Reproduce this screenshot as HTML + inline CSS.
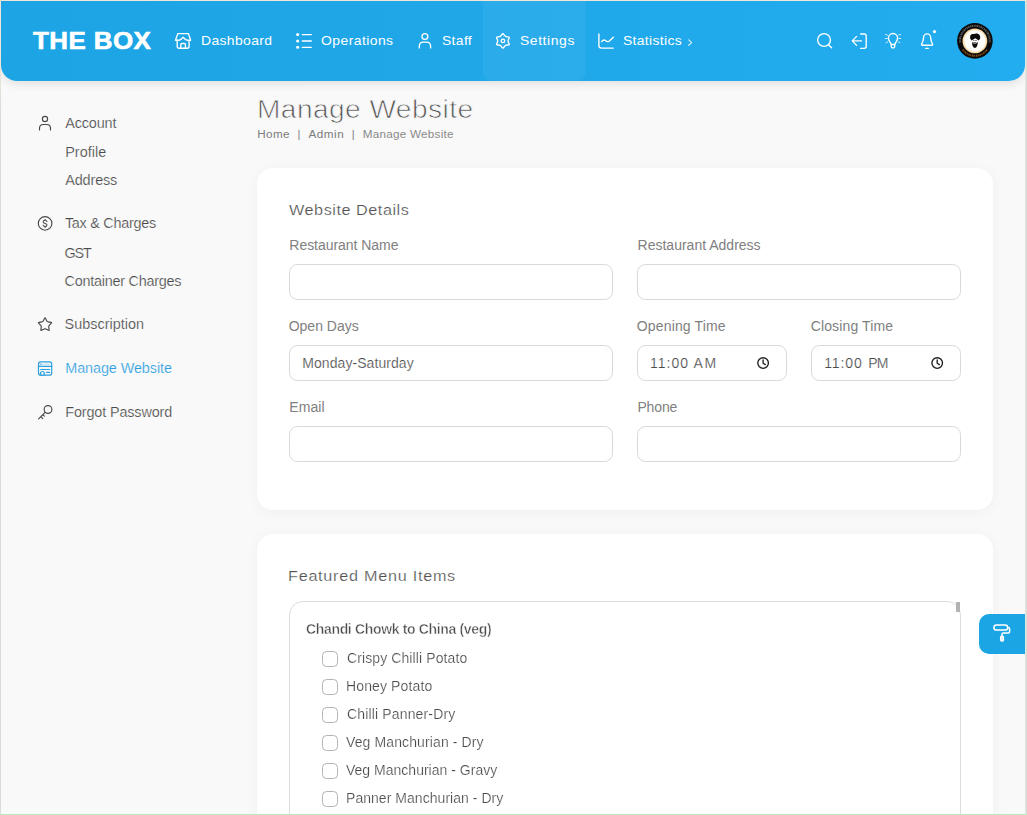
<!DOCTYPE html>
<html lang="en">
<head>
<meta charset="utf-8">
<title>Manage Website - The Box</title>
<style>
*{box-sizing:border-box;margin:0;padding:0}
html,body{width:1027px;height:815px;overflow:hidden}
body{position:relative;background:#f9f9f9;font-family:"Liberation Sans",sans-serif;color:#4a4a4a}
.t{position:absolute;white-space:nowrap;line-height:1;font-weight:400;text-decoration:none;display:block}
svg{position:absolute;overflow:visible;fill:none}
.w{stroke:#fff;stroke-width:1.35;stroke-linecap:round;stroke-linejoin:round}
.g{stroke:#484848;stroke-width:1.15;stroke-linecap:round;stroke-linejoin:round}
.b{stroke:#2a9fe0;stroke-width:1.2;stroke-linecap:round;stroke-linejoin:round}
/* window frame lines */
.edge{position:absolute;z-index:50}
#e-top{left:0;top:0;width:1027px;height:1px;background:#efe6d8}
#e-left{left:0;top:0;width:1px;height:815px;background:linear-gradient(#efe6d8 0,#efe6d8 60px,#d9dcd9 110px,#d9dcd9 100%)}
#e-right{left:1025px;top:1px;width:2px;height:814px;background:linear-gradient(90deg,#e2e5e1 0,#e2e5e1 50%,#d7dcd5 50%,#d7dcd5 100%)}
#e-bot{left:0;top:814px;width:1027px;height:1px;background:#b4f0b6}
header{position:absolute;left:1px;top:1px;width:1024px;height:79.5px;border-radius:0 0 16px 16px;
 background:linear-gradient(90deg,#1ca4e4 0%,#1fa7e8 45%,#22adf0 100%);box-shadow:0 3px 10px rgba(0,0,0,.10);z-index:10}
#tab{position:absolute;left:482px;top:0;width:102.5px;height:79.5px;border-radius:0 0 9px 9px;background:rgba(255,255,255,.055)}
#layer{position:absolute;left:0;top:0;width:1027px;height:815px;z-index:20}
.card{position:absolute;left:257px;width:736px;background:#fff;border-radius:16px;box-shadow:0 2px 14px rgba(0,0,0,.045)}
#c1{top:168px;height:342px}
#c2{top:534px;height:320px}
.inp{position:absolute;height:36px;border:1px solid #d9d9d9;border-radius:8.5px;background:#fff}
#menu{position:absolute;left:289px;top:601px;width:672px;height:260px;border:1px solid #dcdcdc;border-radius:14px;background:#fff}
#thumb{position:absolute;left:956px;top:602px;width:4px;height:10px;background:#b3b3b3}
.cb{position:absolute;left:322px;width:16px;height:16px;border:1px solid #b4b4b4;border-radius:4.5px;background:#fff}
#fab{position:absolute;left:979px;top:613.5px;width:46px;height:40.5px;background:#1ca5e5;border-radius:10px 0 0 10px;z-index:15}
</style>
</head>
<body>
<header><div id="tab"></div></header>

<div class="card" id="c1"></div>
<div class="card" id="c2"></div>
<div id="menu"></div>
<div id="thumb"></div>

<div class="inp" style="left:289px;top:264px;width:324px"></div>
<div class="inp" style="left:637px;top:264px;width:324px"></div>
<div class="inp" style="left:289px;top:345px;width:324px"></div>
<div class="inp" style="left:637px;top:345px;width:150px"></div>
<div class="inp" style="left:811px;top:345px;width:150px"></div>
<div class="inp" style="left:289px;top:426px;width:324px"></div>
<div class="inp" style="left:637px;top:426px;width:324px"></div>

<div class="cb" style="top:650.5px"></div>
<div class="cb" style="top:678.5px"></div>
<div class="cb" style="top:706.5px"></div>
<div class="cb" style="top:734.5px"></div>
<div class="cb" style="top:762.5px"></div>
<div class="cb" style="top:790.5px"></div>

<div id="fab"></div>

<div id="layer">
  <!-- ===== header text ===== -->
  <a class="t logo" href="#" style="left:33.01px;top:29.15px;font-size:23.8px;color:#fff;letter-spacing:0.386px;font-weight:700;transform:scaleX(1.09);transform-origin:0 0;-webkit-text-stroke:.6px #fff;">THE BOX</a>
  <nav>
    <a class="t" href="#" style="left:200.86px;top:34.05px;font-size:13px;color:#fff;letter-spacing:0.349px;transform:scaleX(1.07);transform-origin:0 0;">Dashboard</a>
    <a class="t" href="#" style="left:321.14px;top:34.05px;font-size:13px;color:#fff;letter-spacing:0.417px;transform:scaleX(1.07);transform-origin:0 0;">Operations</a>
    <a class="t" href="#" style="left:441.87px;top:34.05px;font-size:13px;color:#fff;letter-spacing:0.317px;transform:scaleX(1.07);transform-origin:0 0;">Staff</a>
    <a class="t" href="#" style="left:520.37px;top:34.05px;font-size:13px;color:#fff;letter-spacing:0.544px;transform:scaleX(1.07);transform-origin:0 0;">Settings</a>
    <a class="t" href="#" style="left:623.17px;top:34.05px;font-size:13px;color:#fff;letter-spacing:0.310px;transform:scaleX(1.07);transform-origin:0 0;">Statistics</a>
  </nav>
  <!-- ===== sidebar ===== -->
  <aside>
    <a class="t" href="#" style="left:65.17px;top:116.01px;font-size:14.4px;color:#4a4a4a;letter-spacing:-0.111px;-webkit-text-stroke:.2px #f9f9f9;">Account</a>
    <a class="t" href="#" style="left:65.22px;top:144.71px;font-size:14.4px;color:#4a4a4a;letter-spacing:0.055px;-webkit-text-stroke:.2px #f9f9f9;">Profile</a>
    <a class="t" href="#" style="left:65.17px;top:172.91px;font-size:14.4px;color:#4a4a4a;letter-spacing:-0.107px;-webkit-text-stroke:.2px #f9f9f9;">Address</a>
    <a class="t" href="#" style="left:64.88px;top:216.01px;font-size:14.4px;color:#4a4a4a;letter-spacing:-0.253px;-webkit-text-stroke:.2px #f9f9f9;">Tax &amp; Charges</a>
    <a class="t" href="#" style="left:64.48px;top:245.61px;font-size:14.4px;color:#4a4a4a;letter-spacing:-1.114px;-webkit-text-stroke:.2px #f9f9f9;">GST</a>
    <a class="t" href="#" style="left:64.47px;top:273.81px;font-size:14.4px;color:#4a4a4a;letter-spacing:-0.234px;-webkit-text-stroke:.2px #f9f9f9;">Container Charges</a>
    <a class="t" href="#" style="left:64.55px;top:317.01px;font-size:14.4px;color:#4a4a4a;letter-spacing:0.027px;-webkit-text-stroke:.2px #f9f9f9;">Subscription</a>
    <a class="t" href="#" style="left:65.22px;top:360.81px;font-size:14.4px;color:#2a9fe0;letter-spacing:-0.077px;-webkit-text-stroke:.2px #f9f9f9;">Manage Website</a>
    <a class="t" href="#" style="left:65.22px;top:405.01px;font-size:14.4px;color:#4a4a4a;letter-spacing:-0.126px;-webkit-text-stroke:.2px #f9f9f9;">Forgot Password</a>
  </aside>
  <!-- ===== main ===== -->
  <main>
    <h1 class="t" style="left:257.40px;top:95.89px;font-size:26px;color:#555;letter-spacing:0.417px;transform:scaleX(1.08);transform-origin:0 0;-webkit-text-stroke:.75px #f9f9f9;">Manage Website</h1>
    <a class="t" href="#" style="left:257.34px;top:128.30px;font-size:11.7px;color:#7c7c7c;letter-spacing:0.334px;">Home</a>
    <span class="t" style="left:297.42px;top:128.89px;font-size:11px;color:#7c7c7c;">|</span>
    <a class="t" href="#" style="left:308.48px;top:128.30px;font-size:11.7px;color:#7c7c7c;letter-spacing:0.539px;">Admin</a>
    <span class="t" style="left:351.82px;top:128.89px;font-size:11px;color:#7c7c7c;">|</span>
    <span class="t" style="left:362.84px;top:128.30px;font-size:11.7px;color:#8a8a8a;letter-spacing:0.245px;">Manage Website</span>
    <h2 class="t" style="left:289.23px;top:202.10px;font-size:15px;color:#505050;letter-spacing:0.503px;transform:scaleX(1.08);transform-origin:0 0;-webkit-text-stroke:.22px #fff;">Website Details</h2>
    <label class="t" style="left:289.35px;top:238.45px;font-size:14px;color:#808080;letter-spacing:-0.039px;">Restaurant Name</label>
    <label class="t" style="left:637.55px;top:238.45px;font-size:14px;color:#808080;letter-spacing:0.007px;">Restaurant Address</label>
    <label class="t" style="left:288.64px;top:319.25px;font-size:14px;color:#808080;letter-spacing:0.017px;">Open Days</label>
    <label class="t" style="left:636.84px;top:319.25px;font-size:14px;color:#808080;letter-spacing:0.143px;">Opening Time</label>
    <label class="t" style="left:810.69px;top:319.25px;font-size:14px;color:#808080;letter-spacing:0.133px;">Closing Time</label>
    <label class="t" style="left:289.35px;top:400.25px;font-size:14px;color:#808080;letter-spacing:0.045px;">Email</label>
    <label class="t" style="left:637.45px;top:400.25px;font-size:14px;color:#808080;letter-spacing:-0.153px;">Phone</label>
    <span class="t" style="left:302.25px;top:356.35px;font-size:14px;color:#4a4a4a;letter-spacing:0.069px;-webkit-text-stroke:.2px #fff;">Monday-Saturday</span>
    <span class="t" style="left:649.93px;top:356.05px;font-size:14px;color:#4a4a4a;letter-spacing:1.055px;-webkit-text-stroke:.2px #fff;">11:00</span>
    <span class="t" style="left:693.47px;top:356.05px;font-size:14px;color:#4a4a4a;letter-spacing:1.576px;-webkit-text-stroke:.2px #fff;">AM</span>
    <span class="t" style="left:824.13px;top:356.05px;font-size:14px;color:#4a4a4a;letter-spacing:0.930px;-webkit-text-stroke:.2px #fff;">11:00</span>
    <span class="t" style="left:868.25px;top:356.05px;font-size:14px;color:#4a4a4a;letter-spacing:-0.803px;-webkit-text-stroke:.2px #fff;">PM</span>
    <h2 class="t" style="left:288.37px;top:568.20px;font-size:15px;color:#505050;letter-spacing:0.681px;transform:scaleX(1.08);transform-origin:0 0;-webkit-text-stroke:.22px #fff;">Featured Menu Items</h2>
    <h3 class="t" style="left:305.63px;top:621.55px;font-size:14px;color:#4a4a4a;letter-spacing:-0.341px;font-weight:700;-webkit-text-stroke:.45px #fff;will-change:transform;">Chandi Chowk to China (veg)</h3>
    <label class="t" style="left:346.69px;top:650.85px;font-size:14px;color:#4a4a4a;letter-spacing:0.102px;-webkit-text-stroke:.2px #fff;will-change:transform;">Crispy Chilli Potato</label>
    <label class="t" style="left:346.00px;top:678.85px;font-size:14px;color:#4a4a4a;letter-spacing:0.123px;-webkit-text-stroke:.2px #fff;will-change:transform;">Honey Potato</label>
    <label class="t" style="left:346.69px;top:706.85px;font-size:14px;color:#4a4a4a;letter-spacing:0.152px;-webkit-text-stroke:.2px #fff;will-change:transform;">Chilli Panner-Dry</label>
    <label class="t" style="left:346.34px;top:734.85px;font-size:14px;color:#4a4a4a;letter-spacing:0.116px;-webkit-text-stroke:.2px #fff;will-change:transform;">Veg Manchurian - Dry</label>
    <label class="t" style="left:346.34px;top:762.85px;font-size:14px;color:#4a4a4a;letter-spacing:0.011px;-webkit-text-stroke:.2px #fff;will-change:transform;">Veg Manchurian - Gravy</label>
    <label class="t" style="left:346.00px;top:790.85px;font-size:14px;color:#4a4a4a;letter-spacing:0.042px;-webkit-text-stroke:.2px #fff;will-change:transform;">Panner Manchurian - Dry</label>
  </main>

  <!-- ===== icons (page-pixel coordinates) ===== -->
  <svg width="1027" height="815" viewBox="0 0 1027 815" style="left:0;top:0">
    <!-- dashboard -->
    <g class="w">
      <path d="M175.5 40.2 L177.9 33.6 H188.4 L190.7 40.2 H187.2 Q185.6 40.2 183.15 37.3 Q180.7 40.2 179.1 40.2 Z"/>
      <path d="M177.2 40.4 V46.3 Q177.2 48.2 179.1 48.2 H187.2 Q189.1 48.2 189.1 46.3 V40.4"/>
      <path d="M180.8 48 V44.5 Q180.8 43.5 181.8 43.5 H184.4 Q185.4 43.5 185.4 44.5 V48"/>
    </g>
    <!-- operations -->
    <g fill="#fff" stroke="none">
      <circle cx="297.65" cy="34.6" r="1.55"/><circle cx="297.65" cy="40.95" r="1.55"/><circle cx="297.65" cy="47.3" r="1.55"/>
    </g>
    <g class="w"><path d="M302.3 34.6 H311.3 M302.3 40.95 H311.3 M302.3 47.3 H311.3"/></g>
    <!-- staff -->
    <g class="w">
      <circle cx="424.9" cy="36.5" r="2.9"/>
      <path d="M419.3 47.9 V46.2 Q419.3 42.1 423.4 42.1 H426.4 Q430.6 42.1 430.6 46.2 V47.9"/>
    </g>
    <!-- settings -->
    <g class="w">
      <path d="M501.89 34.56 Q502.90 32.95 503.91 34.56 L504.29 35.18 Q505.30 36.79 507.20 36.86 L507.93 36.88 Q509.83 36.95 508.94 38.63 L508.59 39.27 Q507.70 40.95 508.59 42.63 L508.94 43.27 Q509.83 44.95 507.93 45.02 L507.20 45.04 Q505.30 45.11 504.29 46.72 L503.91 47.34 Q502.90 48.95 501.89 47.34 L501.51 46.72 Q500.50 45.11 498.60 45.04 L497.87 45.02 Q495.97 44.95 496.86 43.27 L497.21 42.63 Q498.10 40.95 497.21 39.27 L496.86 38.63 Q495.97 36.95 497.87 36.88 L498.60 36.86 Q500.50 36.79 501.51 35.18 Z"/>
      <circle cx="502.9" cy="40.9" r="1.75"/>
    </g>
    <!-- statistics -->
    <g class="w">
      <path d="M598.9 33.9 V45.6 Q598.9 48.1 601.4 48.1 H613.2"/>
      <path d="M601.6 41.6 Q603.6 39.3 605.2 40.3 Q607.4 42.4 609 41.3 Q611 39.8 613.3 37.3"/>
      <path d="M688.7 39.9 L691.7 42.6 L688.7 45.3" style="stroke-width:1.2;opacity:.8"/>
    </g>
    <!-- search -->
    <g class="w">
      <circle cx="824.05" cy="40.05" r="6.4"/>
      <path d="M828.7 44.9 L831.6 47.7"/>
    </g>
    <!-- logout -->
    <g class="w">
      <path d="M860.6 34 H864.2 Q866.2 34 866.2 36 V46.3 Q866.2 48.3 864.2 48.3 H860.6"/>
      <path d="M852.5 40.9 H861.5 M856.6 36.4 L852.3 40.9 L856.6 45.4"/>
    </g>
    <!-- bulb -->
    <g class="w">
      <path d="M891.2 44.5 C890.9 42.6 888.4 41.4 888.4 38.1 A4.6 4.6 0 0 1 897.6 38.1 C897.6 41.4 895.1 42.6 894.8 44.5 Z"/>
      <path d="M891.2 44.6 V46.3 A1.8 1.8 0 0 0 894.8 46.3 V44.6"/>
      <path d="M885.4 34.5 L887.4 35.1 M885.2 38.5 H887.2 M886 42.8 L887.6 41.9 M900.6 34.5 L898.6 35.1 M900.8 38.5 H898.8 M900 42.8 L898.4 41.9" style="stroke-width:.9;opacity:.85"/>
    </g>
    <!-- bell -->
    <g class="w">
      <path d="M923.6 37.4 A3.5 3.5 0 0 1 930.6 37.4 C930.8 40.6 931.6 42.6 932.6 44.2 Q932.9 45.2 931.9 45.2 H922.3 Q921.3 45.2 921.6 44.2 C922.6 42.6 923.4 40.6 923.6 37.4 Z"/>
      <path d="M925.7 48.3 H928.3"/>
    </g>
    <circle cx="934.5" cy="31.6" r="1.6" fill="#fff"/>
    <!-- avatar -->
    <defs>
      <radialGradient id="av" cx="50%" cy="50%" r="50%">
        <stop offset="0" stop-color="#fff"/><stop offset=".8" stop-color="#fffdf8"/><stop offset=".93" stop-color="#f6dcae"/><stop offset="1" stop-color="#e9c388"/>
      </radialGradient>
    </defs>
    <circle cx="974.9" cy="40.9" r="17.8" fill="#0d0b0a"/>
    <circle cx="974.9" cy="40.9" r="12.4" fill="url(#av)"/>
    <path d="M960.1 42.4 A14.9 14.9 0 1 1 989.7 42.4" stroke="#d8d8d8" stroke-width="2" stroke-dasharray="1.3 .7 .7 .6 1.6 .7 .9 .8 1.2 .6" opacity=".42"/>
    <path d="M962.7 49.45 A14.9 14.9 0 0 0 987.1 49.45" stroke="#c87524" stroke-width="1.8" stroke-dasharray="1.4 .6 .8 .7 1.7 .6 1 .8" opacity=".68"/>
    <g fill="#0d0b0a">
      <path d="M970.4 38.9 C969.3 35.6 971.4 33.5 974 34.1 C975.6 33.1 978.6 33.3 979.7 35.2 C980.8 37 980.1 39.4 978.7 40.5 L975.3 38.3 L971.6 40.6 Z"/>
      <path d="M972.1 41.4 C971.8 45.4 973.3 47.6 974.9 48.1 C976.5 47.6 978 45.4 977.7 41.4 L976.9 42.9 C975.9 43.7 973.9 43.7 972.9 42.9 Z"/>
      <circle cx="973.9" cy="40.5" r=".55"/><circle cx="976" cy="40.5" r=".55"/>
      <path d="M973.4 42.3 Q974.9 41.5 976.4 42.3 L976.4 42.9 Q974.9 42.3 973.4 42.9 Z"/>
    </g>

    <!-- sidebar: account -->
    <g class="g">
      <circle cx="45" cy="119" r="2.6"/>
      <path d="M39.5 130 V128.4 Q39.5 124.5 43.4 124.5 H46.6 Q50.5 124.5 50.5 128.4 V130"/>
    </g>
    <!-- sidebar: tax -->
    <g class="g">
      <circle cx="45.1" cy="223.4" r="6.8"/>
      <path d="M47 221.6 Q46.6 220.3 45.1 220.3 Q43.2 220.3 43.2 221.8 Q43.2 223.1 45.1 223.4 Q47 223.7 47 225.1 Q47 226.6 45.1 226.6 Q43.5 226.6 43.1 225.2 M45.1 219.3 V220.3 M45.1 226.6 V227.6" style="stroke-width:1.05"/>
    </g>
    <!-- sidebar: subscription -->
    <g class="g"><path d="M44.58 318.30 Q45.00 317.50 45.42 318.30 L46.81 320.93 Q47.23 321.73 48.12 321.88 L51.06 322.39 Q51.94 322.54 51.32 323.19 L49.24 325.33 Q48.61 325.97 48.74 326.87 L49.16 329.81 Q49.29 330.71 48.48 330.31 L45.81 329.00 Q45.00 328.60 44.19 329.00 L41.52 330.31 Q40.71 330.71 40.84 329.81 L41.26 326.87 Q41.39 325.97 40.76 325.33 L38.68 323.19 Q38.06 322.54 38.94 322.39 L41.88 321.88 Q42.77 321.73 43.19 320.93 Z"/></g>
    <!-- sidebar: manage website -->
    <g class="b">
      <rect x="38.5" y="361.9" width="13.2" height="13.2" rx="2.2"/>
      <path d="M38.5 366.4 H51.7 M40.6 369.5 H49.6 M46.5 372.4 H49.6" />
      <circle cx="42.4" cy="373.4" r="1.9" fill="#f9f9f9"/>
      <path d="M43.2 364.2 H49.4" style="stroke-width:.7;opacity:.45"/>
    </g>
    <circle cx="41" cy="364.2" r=".8" fill="#2a9fe0"/>
    <!-- sidebar: key -->
    <g class="g">
      <circle cx="48" cy="409.5" r="3.85"/>
      <path d="M45.1 412.4 L38.6 418.8 M41 416.6 L42.7 418.6 M43 414.7 L44.3 416.1"/>
    </g>

    <!-- clock icons in time inputs -->
    <g stroke="#1d1d1d" stroke-width="1.35" stroke-linecap="round" stroke-linejoin="round">
      <circle cx="763.1" cy="363" r="5.3"/><path d="M763.1 360 V363.2 L765.3 364.6"/>
      <circle cx="937.2" cy="363" r="5.3"/><path d="M937.2 360 V363.2 L939.4 364.6"/>
    </g>
  </svg>
  <!-- paint roller (above FAB) -->
  <svg width="1027" height="815" viewBox="0 0 1027 815" style="left:0;top:0;z-index:40">
    <g class="w" style="stroke-width:1.5">
      <rect x="993.9" y="624.9" width="13.8" height="5.2" rx="2.6"/>
      <path d="M1007.7 627.5 H1008.4 Q1009.6 627.5 1009.6 628.7 V631.7 Q1009.6 632.9 1008.4 632.9 H1003.4 Q1002 632.9 1002 634.3 V635.8"/>
      <rect x="1000.7" y="636.2" width="2.7" height="4.7" rx="1" fill="#cfeaf9"/>
    </g>
  </svg>
</div>

<div class="edge" id="e-top"></div>
<div class="edge" id="e-left"></div>
<div class="edge" id="e-right"></div>
<div class="edge" id="e-bot"></div>
</body>
</html>
